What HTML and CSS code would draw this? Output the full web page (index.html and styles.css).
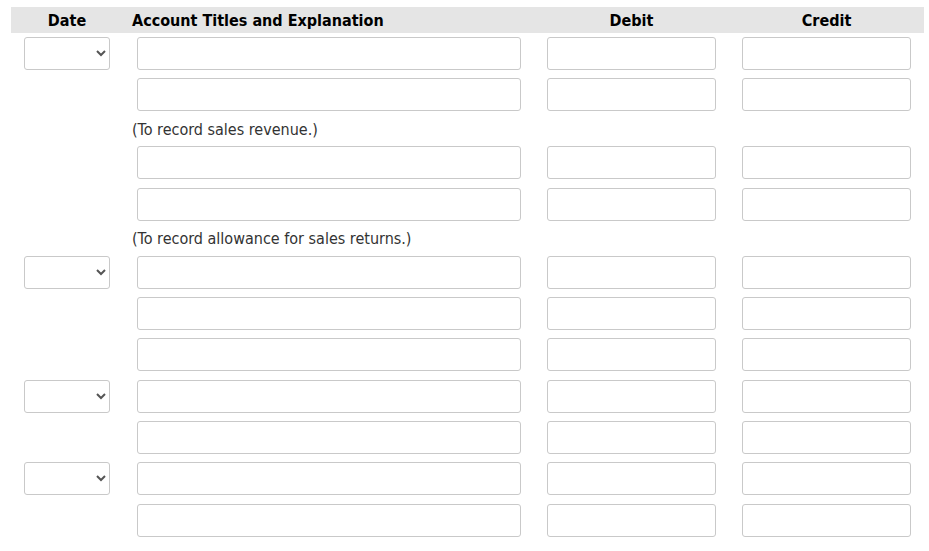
FILE: index.html
```html
<!DOCTYPE html>
<html>
<head>
<meta charset="utf-8">
<link rel="stylesheet" href="styles.css">
</head>
<body>
<div class="journal">
  <div class="row head">
    <div class="hd center">Date</div>
    <div class="hd left">Account Titles and Explanation</div>
    <div class="hd center">Debit</div>
    <div class="hd center">Credit</div>
  </div>

  <div class="row">
    <div class="cell"><select class="date"><option></option></select></div>
    <div class="cell"><input class="field" type="text"></div>
    <div class="cell"><input class="field" type="text"></div>
    <div class="cell"><input class="field" type="text"></div>
  </div>
  <div class="row">
    <div class="cell"></div>
    <div class="cell"><input class="field" type="text"></div>
    <div class="cell"><input class="field" type="text"></div>
    <div class="cell"><input class="field" type="text"></div>
  </div>
  <div class="row note">
    <div></div>
    <div class="explain">(To record sales revenue.)</div>
  </div>
  <div class="row">
    <div class="cell"></div>
    <div class="cell"><input class="field" type="text"></div>
    <div class="cell"><input class="field" type="text"></div>
    <div class="cell"><input class="field" type="text"></div>
  </div>
  <div class="row">
    <div class="cell"></div>
    <div class="cell"><input class="field" type="text"></div>
    <div class="cell"><input class="field" type="text"></div>
    <div class="cell"><input class="field" type="text"></div>
  </div>
  <div class="row note">
    <div></div>
    <div class="explain">(To record allowance for sales returns.)</div>
  </div>

  <div class="row">
    <div class="cell"><select class="date"><option></option></select></div>
    <div class="cell"><input class="field" type="text"></div>
    <div class="cell"><input class="field" type="text"></div>
    <div class="cell"><input class="field" type="text"></div>
  </div>
  <div class="row">
    <div class="cell"></div>
    <div class="cell"><input class="field" type="text"></div>
    <div class="cell"><input class="field" type="text"></div>
    <div class="cell"><input class="field" type="text"></div>
  </div>
  <div class="row">
    <div class="cell"></div>
    <div class="cell"><input class="field" type="text"></div>
    <div class="cell"><input class="field" type="text"></div>
    <div class="cell"><input class="field" type="text"></div>
  </div>

  <div class="row">
    <div class="cell"><select class="date"><option></option></select></div>
    <div class="cell"><input class="field" type="text"></div>
    <div class="cell"><input class="field" type="text"></div>
    <div class="cell"><input class="field" type="text"></div>
  </div>
  <div class="row">
    <div class="cell"></div>
    <div class="cell"><input class="field" type="text"></div>
    <div class="cell"><input class="field" type="text"></div>
    <div class="cell"><input class="field" type="text"></div>
  </div>

  <div class="row">
    <div class="cell"><select class="date"><option></option></select></div>
    <div class="cell"><input class="field" type="text"></div>
    <div class="cell"><input class="field" type="text"></div>
    <div class="cell"><input class="field" type="text"></div>
  </div>
  <div class="row">
    <div class="cell"></div>
    <div class="cell"><input class="field" type="text"></div>
    <div class="cell"><input class="field" type="text"></div>
    <div class="cell"><input class="field" type="text"></div>
  </div>
</div>
</body>
</html>
```
FILE: styles.css
```css
html, body {
  margin: 0;
  padding: 0;
  background: #ffffff;
}
body {
  padding: 7px 5px 0 11px;
  font-family: "DejaVu Sans Condensed", "DejaVu Sans", sans-serif;
  font-size: 16px;
  color: #000;
}
.journal {
  width: 913px;
}
.row {
  display: grid;
  grid-template-columns: 112px 411px 195px 195px;
  height: 41.33px;
  align-items: center;
}
.row.head {
  height: 26px;
  background: #e5e5e5;
}
.hd {
  font-weight: bold;
  line-height: 27px;
}
.hd.center { text-align: center; }
.hd.left { padding-left: 9px; }
.cell {
  padding: 0 13px;
  display: flex;
}
.cell:nth-child(2) { padding-left: 14px; }
.field, .date {
  box-sizing: border-box;
  width: 100%;
  height: 33px;
  margin: 0;
  border: 1px solid #c9c9c9;
  border-radius: 3px;
  background: #fff;
  font-family: inherit;
  font-size: 15px;
  outline: none;
}
.date {
  padding: 0 4px;
  color: #555;
}
.row.note {
  height: 26.67px;
}
.explain {
  padding-left: 9px;
  color: #333;
  line-height: 27px;
}
```
